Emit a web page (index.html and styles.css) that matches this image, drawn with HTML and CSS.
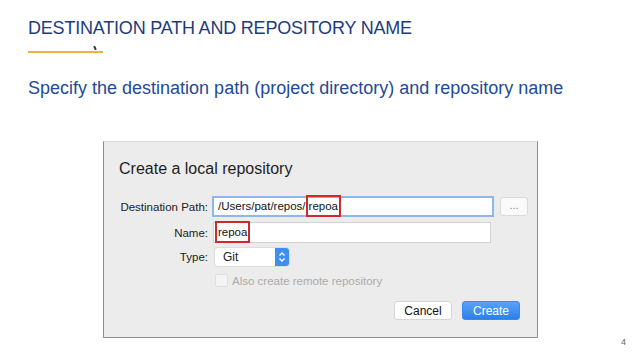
FILE: index.html
```html
<!DOCTYPE html>
<html lang="en">
<head>
    <meta charset="UTF-8">
    <title>Destination Path and Repository Name</title>
    <link rel="stylesheet" href="styles.css">
</head>
<body>
    <div class="slide">
        <h1 class="title">DESTINATION PATH AND REPOSITORY NAME</h1>
        <div class="rule"><span class="cursor"></span></div>
        <p class="subtitle">Specify the destination path (project directory) and repository name</p>

        <div class="dialog">
            <h2>Create a local repository</h2>
            <div class="form">
                <label>Destination Path:</label>
                <div class="row">
                    <div class="field focus">/Users/pat/repos/<span class="mark">repoa</span></div>
                    <button class="dots">...</button>
                </div>

                <label>Name:</label>
                <div class="row">
                    <div class="field plain"><span class="mark">repoa</span></div>
                </div>

                <label>Type:</label>
                <div class="row">
                    <div class="popup">
                        <span class="popup-text">Git</span>
                        <span class="popup-arrow">
                            <svg width="8" height="12" viewBox="0 0 8 12"><path d="M1.5 4.5 L4 2 L6.5 4.5 M1.5 7.5 L4 10 L6.5 7.5" fill="none" stroke="#fff" stroke-width="1.4"/></svg>
                        </span>
                    </div>
                </div>

                <span></span>
                <div class="row check">
                    <span class="box"></span>
                    <span>Also create remote repository</span>
                </div>
            </div>
            <div class="actions">
                <button class="btn">Cancel</button>
                <button class="btn primary">Create</button>
            </div>
        </div>
        <div class="page">4</div>
    </div>
</body>
</html>
```

FILE: styles.css
```css
body {
    margin: 0;
    background: #fff;
    font-family: "Liberation Sans", Arial, sans-serif;
}
.slide {
    position: relative;
    width: 640px;
    height: 360px;
    padding: 18px 0 0 28px;
    box-sizing: border-box;
}
.title {
    margin: 0;
    font-size: 18px;
    font-weight: normal;
    color: #1d3c7c;
    letter-spacing: -0.2px;
}
.rule {
    position: relative;
    width: 75px;
    height: 2px;
    margin-top: 12px;
    background: #f0b23c;
}
.cursor {
    position: absolute;
    left: 66px;
    top: -5px;
    width: 2px;
    height: 4px;
    background: #333;
    transform: rotate(-25deg);
}
.subtitle {
    margin: 25px 0 0;
    font-size: 18px;
    color: #1f4a98;
}
.dialog {
    width: 435px;
    height: 197px;
    margin: 42px 0 0 75px;
    border: 1px solid #8c8c8c;
    border-top-color: #d8d8d8;
    background: #ececec;
    box-sizing: border-box;
    padding: 18px 0 0 15px;
    color: #222;
}
.dialog h2 {
    margin: 0;
    font-size: 16px;
    font-weight: normal;
    color: #1e1e1e;
}
.form {
    display: grid;
    grid-template-columns: 89px 1fr;
    column-gap: 4px;
    row-gap: 5px;
    margin-top: 18px;
    align-items: center;
    font-size: 11.5px;
}
.form label {
    text-align: right;
    white-space: nowrap;
    color: #222;
}
.row {
    display: flex;
    align-items: center;
}
.field {
    box-sizing: border-box;
    background: #fff;
    height: 21px;
    line-height: 17px;
    font-size: 11.5px;
    color: #111;
}
.field.focus {
    width: 282px;
    border: 2px solid #8fb5ee;
    padding-left: 4px;
}
.field.plain {
    width: 278px;
    margin-left: 1px;
    border: 1px solid #d2d2d2;
    padding-left: 1px;
    line-height: 19px;
}
.mark {
    display: inline-block;
    border: 2px solid #d2282b;
    padding: 1px 1px;
    line-height: 16px;
    margin: -3px 0;
}
.dots {
    width: 28px;
    height: 19px;
    margin-left: 6px;
    border: 1px solid #dadada;
    border-radius: 3px;
    background: #fafafa;
    font-family: inherit;
    font-size: 11px;
    color: #888;
    padding: 0 0 4px;
}
.popup {
    display: flex;
    width: 74px;
    height: 18px;
    margin-left: 3px;
    background: #fff;
    border-radius: 3px;
    box-shadow: 0 0 0 1px #dcdcdc;
    overflow: hidden;
}
.popup-text {
    flex: 1;
    padding-left: 8px;
    line-height: 18px;
    font-size: 12px;
}
.popup-arrow {
    width: 14px;
    display: flex;
    align-items: center;
    justify-content: center;
    background: #3f8ef2;
}
.check {
    margin-top: 3px;
    color: #ababab;
    font-size: 11.5px;
    gap: 4px;
}
.box {
    width: 11px;
    height: 11px;
    margin-left: 3px;
    border: 1px solid #dedede;
    border-radius: 2px;
    background: #f4f4f4;
}
.actions {
    display: flex;
    justify-content: flex-end;
    gap: 10px;
    margin: 14px 17px 0 0;
}
.btn {
    width: 58px;
    height: 19px;
    padding: 0;
    border: 1px solid #d6d6d6;
    border-radius: 3px;
    background: #fff;
    font-family: inherit;
    font-size: 12px;
    color: #111;
}
.btn.primary {
    border-color: #3a87ee;
    background: linear-gradient(#5aa2f6, #2c7fec);
    color: #fff;
}
.page {
    position: absolute;
    right: 14px;
    bottom: 13px;
    font-size: 9px;
    color: #666;
}
```
